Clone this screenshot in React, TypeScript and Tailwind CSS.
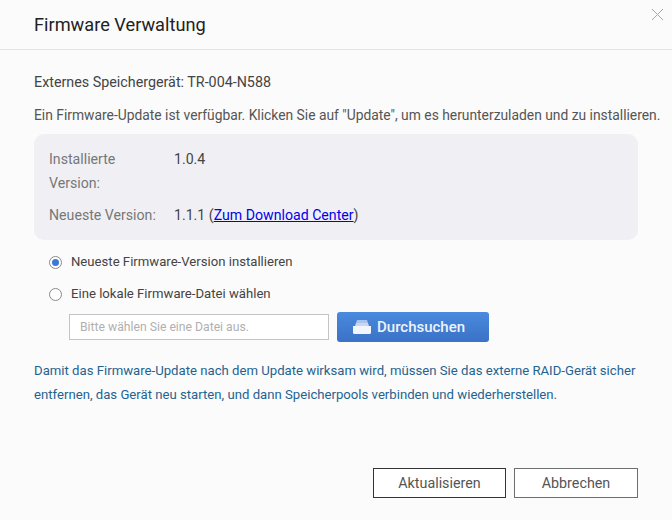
import React, { useState } from 'react';

function FolderIcon() {
  return (
    <svg width="18" height="14" viewBox="0 0 18 14" className="shrink-0">
      <path d="M4 0 H14 L15 3 H3 Z" fill="#a9c3ec" />
      <path d="M3 3 H15 L16 6 H2 Z" fill="#c6d7f2" />
      <path d="M0 6 H18 V12.5 Q18 14 16.5 14 H1.5 Q0 14 0 12.5 Z" fill="#f2f5fb" />
    </svg>
  );
}

function Radio({ checked, label, onClick }: { checked: boolean; label: string; onClick: () => void }) {
  return (
    <label className="flex items-center h-[22px] cursor-pointer" onClick={onClick}>
      <span className="w-[13px] h-[13px] ml-[15px] mr-[9px] rounded-full border border-[#8a8a8a] bg-white flex items-center justify-center shrink-0">
        {checked && <span className="w-[7px] h-[7px] rounded-full bg-[#3c78d8]" />}
      </span>
      <span className="text-[13.15px] text-[#444444]">{label}</span>
    </label>
  );
}

export default function App() {
  const [mode, setMode] = useState('latest');

  return (
    <div className="w-[672px] h-[520px] bg-[#fbfbfb] flex flex-col relative overflow-hidden font-['Roboto',sans-serif]">
      <button className="absolute top-[8px] right-[8px] text-[#a8a8a8]">
        <svg width="13" height="13" viewBox="0 0 13 13" fill="none" stroke="currentColor" strokeWidth="1">
          <path d="M1 1 L12 12 M12 1 L1 12" />
        </svg>
      </button>

      {/* Header */}
      <div className="h-[50px] shrink-0 border-b border-[#e2e2e2] px-[34px] pt-[12px]">
        <h1 className="text-[18.2px] leading-[26px] text-[#222222]">Firmware Verwaltung</h1>
      </div>

      {/* Body */}
      <div className="flex-1 px-[34px] flex flex-col">
        <p className="mt-[22px] text-[14.3px] leading-[20px] text-[#444444]">Externes Speichergerät: TR-004-N588</p>
        <p className="mt-[13px] text-[13.84px] leading-[20px] text-[#555555] whitespace-nowrap">
          Ein Firmware-Update ist verfügbar. Klicken Sie auf "Update", um es herunterzuladen und zu installieren.
        </p>

        <div className="mt-[9px] h-[106px] bg-[#f0f0f4] rounded-[10px] pl-[15px] pt-[13px] text-[14.15px] leading-[24px]">
          <div className="flex">
            <div className="w-[125px] text-[#777777]">Installierte<br />Version:</div>
            <div className="text-[#444444]">1.0.4</div>
          </div>
          <div className="flex mt-[8px]">
            <div className="w-[125px] text-[#777777]">Neueste Version:</div>
            <div className="text-[#444444]">
              1.1.1 (<a href="#" className="text-[#0000ee] underline">Zum Download Center</a>)
            </div>
          </div>
        </div>

        <div className="mt-[11px] flex flex-col gap-[10px]">
          <Radio checked={mode === 'latest'} label="Neueste Firmware-Version installieren" onClick={() => setMode('latest')} />
          <Radio checked={mode === 'local'} label="Eine lokale Firmware-Datei wählen" onClick={() => setMode('local')} />
        </div>

        <div className="mt-[7px] ml-[35px] flex items-center gap-[8px]">
          <input
            placeholder="Bitte wählen Sie eine Datei aus."
            className="w-[260px] h-[26px] border border-[#c4c4c4] bg-white px-[10px] text-[12.2px] outline-none placeholder:text-[#b0b0b0]"
          />
          <button className="w-[152px] h-[30px] rounded-[3px] bg-gradient-to-b from-[#4a8adf] to-[#3a72c6] flex items-center pl-[16px] gap-[6px] text-[15px] font-medium text-[#eef3fb]">
            <FolderIcon />
            Durchsuchen
          </button>
        </div>

        <p className="mt-[17px] text-[13.16px] leading-[24px] text-[#1f6391] whitespace-nowrap">
          Damit das Firmware-Update nach dem Update wirksam wird, müssen Sie das externe RAID-Gerät sicher<br />
          entfernen, das Gerät neu starten, und dann Speicherpools verbinden und wiederherstellen.
        </p>
      </div>

      {/* Footer */}
      <div className="flex justify-end gap-[8px] pr-[34px] pb-[22px]">
        <button className="w-[133px] h-[30px] pt-[1px] bg-white border border-[#333333] text-[14.3px] text-[#555555]">Aktualisieren</button>
        <button className="w-[124px] h-[30px] pt-[1px] bg-white border border-[#6e6e6e] text-[14.3px] text-[#555555]">Abbrechen</button>
      </div>
    </div>
  );
}
